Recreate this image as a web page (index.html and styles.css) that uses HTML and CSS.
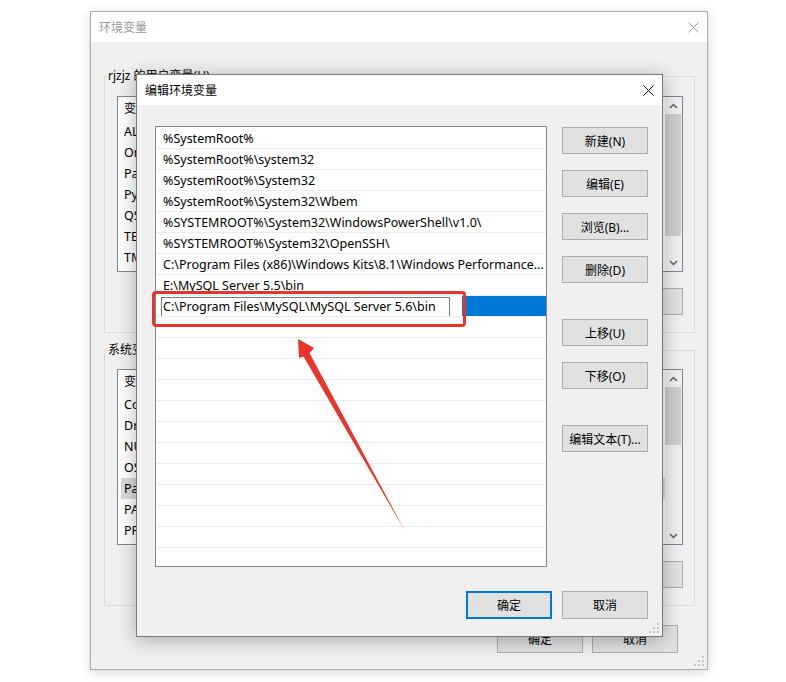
FILE: index.html
```html
<!DOCTYPE html>
<html lang="zh-CN">
<head>
  <meta charset="UTF-8" />
  <title>编辑环境变量</title>
  <link rel="stylesheet" href="styles.css">
</head>
<body>
<div class="desktop">

  <!-- 环境变量 (inactive, behind) -->
  <div class="win back">
    <div class="titlebar">
      <span class="title">环境变量</span>
      <span class="close"><svg width="11" height="11" viewBox="0 0 11 11"><path d="M0.5 0.5L10.5 10.5M10.5 0.5L0.5 10.5"/></svg></span>
    </div>
    <div class="env-body">
      <fieldset class="group">
        <legend>rjzjz 的用户变量(U)</legend>
        <div class="group-inner">
          <div class="var-list">
            <div class="var-table">
              <div class="var-head"><span class="col-name">变量</span></div>
              <div class="var-row"><span class="col-name">ALI</span></div>
              <div class="var-row"><span class="col-name">One</span></div>
              <div class="var-row"><span class="col-name">Path</span></div>
              <div class="var-row"><span class="col-name">PyC</span></div>
              <div class="var-row"><span class="col-name">QSY</span></div>
              <div class="var-row"><span class="col-name">TEMP</span></div>
              <div class="var-row"><span class="col-name">TMP</span></div>
            </div>
            <div class="vscroll">
              <span class="arrow"><svg width="9" height="6" viewBox="0 0 9 6"><path d="M1 5L4.5 1.5L8 5"/></svg></span>
              <div class="track"><div class="thumb" style="height: 122px;"></div></div>
              <span class="arrow"><svg width="9" height="6" viewBox="0 0 9 6"><path d="M1 1L4.5 4.5L8 1"/></svg></span>
            </div>
          </div>
          <div class="group-btns">
            <button class="btn"></button>
            <button class="btn"></button>
            <button class="btn"></button>
          </div>
        </div>
      </fieldset>

      <fieldset class="group">
        <legend>系统变量(S)</legend>
        <div class="group-inner">
          <div class="var-list">
            <div class="var-table">
              <div class="var-head"><span class="col-name">变量</span></div>
              <div class="var-row"><span class="col-name">Com</span></div>
              <div class="var-row"><span class="col-name">Dri</span></div>
              <div class="var-row"><span class="col-name">NUM</span></div>
              <div class="var-row"><span class="col-name">OS</span></div>
              <div class="var-row picked"><span class="col-name">Path</span></div>
              <div class="var-row"><span class="col-name">PAT</span></div>
              <div class="var-row"><span class="col-name">PRO</span></div>
            </div>
            <div class="vscroll">
              <span class="arrow"><svg width="9" height="6" viewBox="0 0 9 6"><path d="M1 5L4.5 1.5L8 5"/></svg></span>
              <div class="track"><div class="thumb" style="height: 58px;"></div></div>
              <span class="arrow"><svg width="9" height="6" viewBox="0 0 9 6"><path d="M1 1L4.5 4.5L8 1"/></svg></span>
            </div>
          </div>
          <div class="group-btns">
            <button class="btn"></button>
            <button class="btn"></button>
            <button class="btn"></button>
          </div>
        </div>
      </fieldset>
    </div>
    <div class="env-footer">
      <button class="btn">确定</button>
      <button class="btn">取消</button>
    </div>
    <svg class="grip" width="10" height="10" viewBox="0 0 10 10"><path d="M8 0h2v2h-2zM8 4h2v2h-2zM4 4h2v2h-2zM8 8h2v2h-2zM4 8h2v2h-2zM0 8h2v2h-2z"/></svg>
  </div>

  <!-- 编辑环境变量 (active) -->
  <div class="win front">
    <div class="titlebar">
      <span class="title">编辑环境变量</span>
      <span class="close"><svg width="11" height="11" viewBox="0 0 11 11"><path d="M0.5 0.5L10.5 10.5M10.5 0.5L0.5 10.5"/></svg></span>
    </div>
    <div class="edit-body">
      <div class="path-list">
        <div class="path-row">%SystemRoot%</div>
        <div class="path-row">%SystemRoot%\system32</div>
        <div class="path-row">%SystemRoot%\System32</div>
        <div class="path-row">%SystemRoot%\System32\Wbem</div>
        <div class="path-row">%SYSTEMROOT%\System32\WindowsPowerShell\v1.0\</div>
        <div class="path-row">%SYSTEMROOT%\System32\OpenSSH\</div>
        <div class="path-row">C:\Program Files (x86)\Windows Kits\8.1\Windows Performance...</div>
        <div class="path-row">E:\MySQL Server 5.5\bin</div>
        <div class="path-row selected">
          <div class="edit-wrap"><span class="edit">C:\Program Files\MySQL\MySQL Server 5.6\bin</span></div>
        </div>
        <div class="path-row"></div>
        <div class="path-row"></div>
        <div class="path-row"></div>
        <div class="path-row"></div>
        <div class="path-row"></div>
        <div class="path-row"></div>
        <div class="path-row"></div>
        <div class="path-row"></div>
        <div class="path-row"></div>
        <div class="path-row"></div>
        <div class="path-row"></div>
        <div class="path-row"></div>
      </div>
      <div class="side">
        <button class="btn">新建(N)</button>
        <button class="btn">编辑(E)</button>
        <button class="btn">浏览(B)...</button>
        <button class="btn">删除(D)</button>
        <button class="btn sep">上移(U)</button>
        <button class="btn">下移(O)</button>
        <button class="btn sep">编辑文本(T)...</button>
      </div>
    </div>
    <div class="edit-footer">
      <button class="btn default">确定</button>
      <button class="btn">取消</button>
    </div>
    <svg class="grip" width="10" height="10" viewBox="0 0 10 10"><path d="M8 0h2v2h-2zM8 4h2v2h-2zM4 4h2v2h-2zM8 8h2v2h-2zM4 8h2v2h-2zM0 8h2v2h-2z"/></svg>
  </div>

  <!-- annotation -->
  <div class="callout"></div>
  <svg class="annot" width="786" height="682" viewBox="0 0 786 682">
    <polygon points="298,339 314,348 309.5,353 405,531 303.5,356.5 299,358" />
  </svg>

</div>
</body>
</html>
```

FILE: styles.css
```css
* {
  box-sizing: border-box;
}

body {
  margin: 0;
  background: #fff;
  font-family: "Noto Sans", "Noto Sans CJK SC", sans-serif;
  font-size: 12px;
  color: #000;
}

.desktop {
  position: relative;
  width: 786px;
  height: 682px;
  overflow: hidden;
}

/* windows */
.win {
  position: absolute;
  display: flex;
  flex-direction: column;
  background: #f0f0f0;
}

.win.back {
  left: 90px;
  top: 11px;
  width: 618px;
  height: 659px;
  border: 1px solid #ababab;
  box-shadow: 0 2px 10px rgba(0, 0, 0, 0.16);
}

.win.front {
  left: 136px;
  top: 74px;
  width: 527px;
  height: 563px;
  border: 1px solid #7a7a7a;
  box-shadow: 0 3px 18px rgba(0, 0, 0, 0.3);
}

.titlebar {
  flex: none;
  height: 30px;
  display: flex;
  align-items: center;
  justify-content: space-between;
  padding-left: 8px;
  background: #fff;
}

.back .title {
  color: #999;
}

.close {
  width: 28px;
  height: 30px;
  display: flex;
  align-items: center;
  justify-content: center;
}

.close svg {
  stroke: #111;
  stroke-width: 1;
}

.back .close svg {
  stroke: #a0a0a0;
}

.grip {
  position: absolute;
  right: 3px;
  bottom: 3px;
  fill: #c4c4c4;
}

.btn {
  height: 27px;
  padding: 0;
  border: 1px solid #adadad;
  background: #e1e1e1;
  font: inherit;
  color: #000;
}

/* 环境变量 */
.env-body {
  display: flex;
  flex-direction: column;
  gap: 9px;
  padding: 26px 12px 0 13px;
}

.group {
  margin: 0;
  padding: 0;
  min-width: 0;
  border: 1px solid #dcdcdc;
}

.group legend {
  margin-left: 2px;
  padding: 0 1px;
  line-height: 16px;
}

.group-inner {
  padding: 12px 11px 17px 12px;
}

.group + .group .group-inner {
  padding-top: 11px;
}

.var-list {
  display: flex;
  height: 176px;
  border: 1px solid #828790;
  background: #fff;
}

.var-table {
  flex: 1;
  overflow: hidden;
}

.var-head {
  display: flex;
  height: 24px;
  line-height: 24px;
  padding-left: 6px;
  white-space: nowrap;
}

.var-row {
  display: flex;
  height: 21px;
  line-height: 21px;
  margin-left: 3px;
  padding-left: 3px;
  font-size: 12.5px;
  white-space: nowrap;
}

.var-row.picked {
  background: #d9d9d9;
}

.col-name {
  width: 150px;
  flex: none;
}

.vscroll {
  width: 17px;
  display: flex;
  flex-direction: column;
  background: #f0f0f0;
}

.arrow {
  height: 17px;
  flex: none;
  display: flex;
  align-items: center;
  justify-content: center;
}

.arrow svg {
  fill: none;
  stroke: #606060;
  stroke-width: 1.5;
}

.track {
  flex: 1;
}

.thumb {
  margin-right: 1px;
  background: #cdcdcd;
}

.group-btns {
  display: flex;
  justify-content: flex-end;
  gap: 9px;
  margin-top: 16px;
}

.group-btns .btn {
  width: 86px;
}

.env-footer {
  display: flex;
  justify-content: flex-end;
  gap: 9px;
  padding: 19px 29px 0 0;
}

.env-footer .btn {
  width: 86px;
  height: 28px;
}

/* 编辑环境变量 */
.edit-body {
  display: flex;
  gap: 15px;
  padding: 21px 14px 0 18px;
}

.path-list {
  width: 392px;
  height: 441px;
  padding-top: 1px;
  border: 1px solid #828790;
  background: #fff;
  overflow: hidden;
}

.path-row {
  height: 21px;
  padding: 1px 0 0 7px;
  line-height: 19px;
  font-size: 12.5px;
  border-bottom: 1px solid #ececec;
  white-space: nowrap;
  overflow: hidden;
}

.path-row.selected {
  padding: 0;
  background: #0078d7;
}

.edit-wrap {
  width: 306px;
  height: 20px;
  padding: 1px 0 0 5px;
  background: #fff;
}

.edit {
  display: block;
  width: 289px;
  height: 20px;
  padding-left: 1px;
  line-height: 18px;
  border: 1px solid #7a7a7a;
  background: #fff;
}

.side {
  width: 86px;
  display: flex;
  flex-direction: column;
  gap: 16px;
  padding-top: 1px;
}

.side .sep {
  margin-top: 20px;
}

.edit-footer {
  display: flex;
  justify-content: flex-end;
  gap: 10px;
  padding: 24px 14px 17px 0;
}

.edit-footer .btn {
  width: 86px;
  height: 28px;
}

.edit-footer .default {
  border: 2px solid #0078d7;
}

/* annotation */
.callout {
  position: absolute;
  left: 152px;
  top: 291px;
  width: 314px;
  height: 36px;
  border: 3px solid #e8342a;
  border-radius: 4px;
}

.annot {
  position: absolute;
  left: 0;
  top: 0;
  pointer-events: none;
  fill: #e8342a;
}
```
